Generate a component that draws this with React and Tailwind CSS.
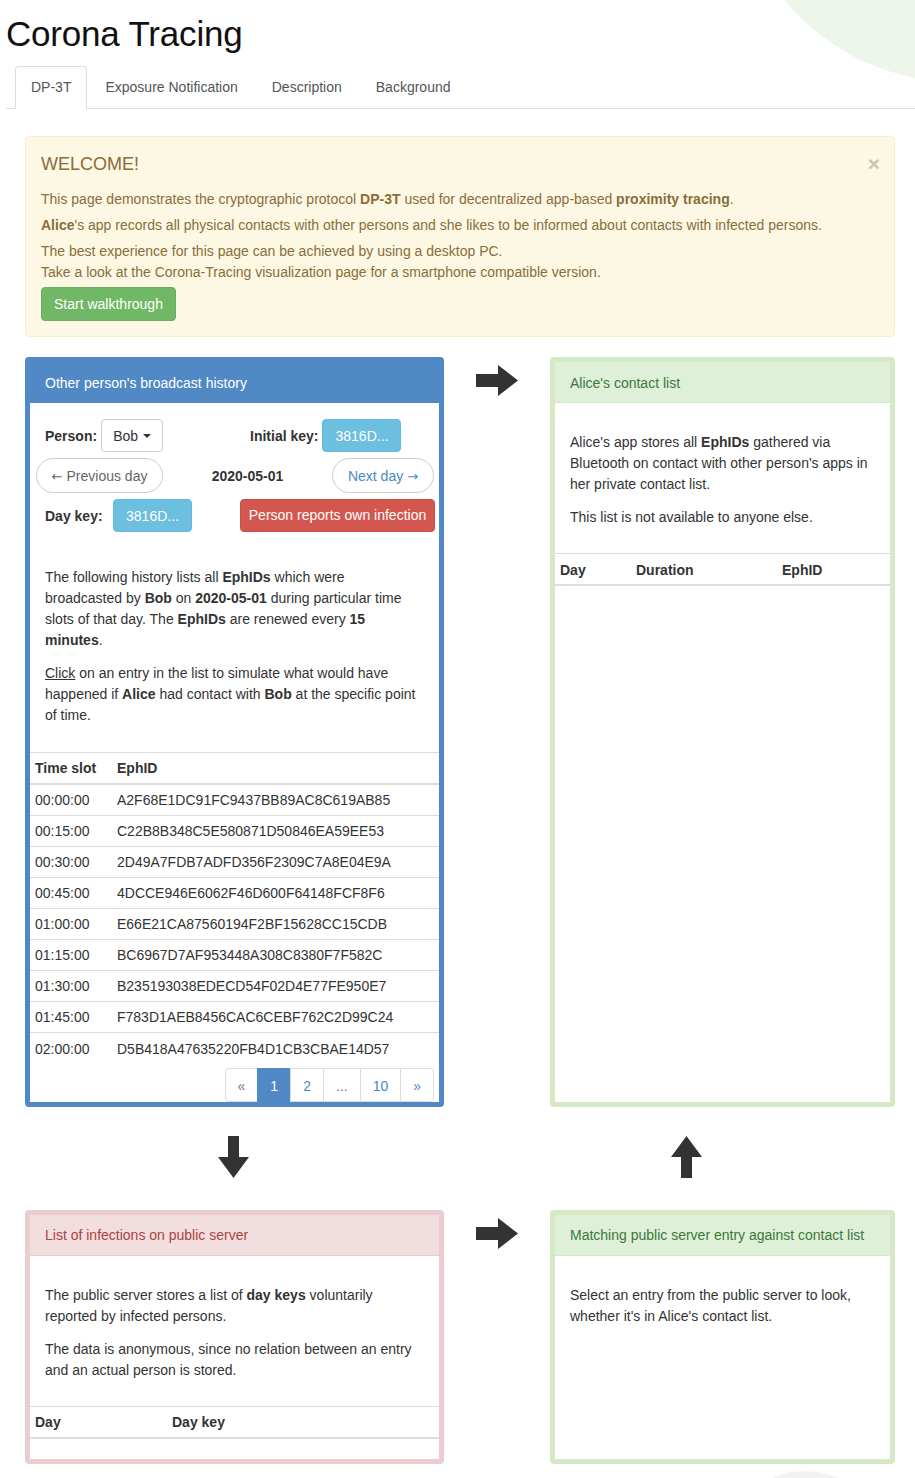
import React from 'react';

const slots = [
  ['00:00:00', 'A2F68E1DC91FC9437BB89AC8C619AB85'],
  ['00:15:00', 'C22B8B348C5E580871D50846EA59EE53'],
  ['00:30:00', '2D49A7FDB7ADFD356F2309C7A8E04E9A'],
  ['00:45:00', '4DCCE946E6062F46D600F64148FCF8F6'],
  ['01:00:00', 'E66E21CA87560194F2BF15628CC15CDB'],
  ['01:15:00', 'BC6967D7AF953448A308C8380F7F582C'],
  ['01:30:00', 'B235193038EDECD54F02D4E77FE950E7'],
  ['01:45:00', 'F783D1AEB8456CAC6CEBF762C2D99C24'],
  ['02:00:00', 'D5B418A47635220FB4D1CB3CBAE14D57'],
];

const ArrowRight = () => (
  <svg width="42" height="31" viewBox="0 0 42 31">
    <polygon points="0,9 22,9 22,0 42,15.5 22,31 22,22 0,22" fill="#333" />
  </svg>
);

const ArrowDown = () => (
  <svg width="31" height="42" viewBox="0 0 31 42">
    <polygon points="10,0 21,0 21,21 31,21 15.5,42 0,21 10,21" fill="#333" />
  </svg>
);

const ArrowUp = () => (
  <svg width="31" height="42" viewBox="0 0 31 42">
    <polygon points="15.5,0 31,21 21,21 21,42 10,42 10,21 0,21" fill="#333" />
  </svg>
);

const InfoBtn = ({ className = '' }) => (
  <div className={`flex h-[33px] w-[79px] items-center justify-center rounded-[4px] border border-[#5fbcdc] bg-[#6cbfdf] pt-[1px] text-white ${className}`}>
    3816D...
  </div>
);

export default function App() {
  return (
    <div className="relative min-h-[1478px] w-[915px] overflow-hidden bg-white font-['Liberation_Sans',Arial,sans-serif] text-[14px] leading-[21px] text-[#333]">
      {/* decorative background shapes */}
      <div className="absolute left-[735px] top-[-362px] h-[444px] w-[444px] rounded-full bg-[#eef6ec]" />
      <div className="absolute left-[725px] top-[1471px] h-[160px] w-[160px] rounded-full bg-[#f2f2f2]" />

      <h1 className="relative pl-[6px] pt-[14px] text-[35px] leading-[40px] tracking-[-0.2px] text-[#111]">Corona Tracing</h1>

      {/* tabs */}
      <div className="relative ml-[6px] mt-[12px] flex border-b border-[#ddd] pl-[9px]">
        <div className="-mb-px mr-[2px] rounded-t-[4px] border border-[#ddd] border-b-white bg-white px-[15px] py-[10px] leading-[20px] text-[#555]">DP-3T</div>
        {['Exposure Notification', 'Description', 'Background'].map((t) => (
          <div key={t} className="mr-[2px] rounded-t-[4px] border border-transparent px-[15px] py-[10px] leading-[20px] text-[#555]">{t}</div>
        ))}
      </div>

      {/* welcome alert */}
      <div className="relative ml-[25px] mt-[27px] w-[870px] rounded-[4px] border border-[#faebcc] bg-[#fcf8e3] p-[15px] text-[#8a6d3b]">
        <div className="flex items-center justify-between">
          <div className="text-[18px] leading-[24px]">WELCOME!</div>
          <div className="mr-[-1px] text-[21px] font-bold leading-[24px] text-[#c9c4b4]">×</div>
        </div>
        <p className="mt-[13px]">This page demonstrates the cryptographic protocol <b>DP-3T</b> used for decentralized app-based <b>proximity tracing</b>.</p>
        <p className="mt-[5px]"><b>Alice</b>'s app records all physical contacts with other persons and she likes to be informed about contacts with infected persons.</p>
        <p className="mt-[5px]">The best experience for this page can be achieved by using a desktop PC.<br />Take a look at the Corona-Tracing visualization page for a smartphone compatible version.</p>
        <div className="mt-[4px] inline-flex h-[34px] items-center rounded-[4px] border border-[#68ae5f] bg-[#70b766] px-[12px] pt-[1px] text-white">Start walkthrough</div>
      </div>

      {/* panels grid */}
      <div className="relative ml-[25px] mt-[20px] grid grid-cols-[419px_106px_345px]">
        {/* broadcast history */}
        <div className="flex flex-col rounded-[4px] border-[5px] border-[#5089c6] bg-white">
          <div className="flex h-[41px] items-center bg-[#5089c6] px-[15px] pt-[2px] text-white">Other person's broadcast history</div>
          <div className="flex flex-col">
            <div className="px-[15px] pt-[16px]">
              <div className="flex h-[33px] items-center">
                <div className="flex w-[205px] items-center">
                  <b className="pt-[2px]">Person:</b>
                  <div className="ml-[4px] flex h-[33px] w-[62px] items-center justify-center rounded-[4px] border border-[#ccc] bg-white pt-[1px]">
                    Bob
                    <span className="ml-[5px] inline-block h-0 w-0 border-x-[4px] border-t-[4px] border-x-transparent border-t-[#333]" />
                  </div>
                </div>
                <b className="pt-[2px]">Initial key:</b>
                <InfoBtn className="ml-[4px]" />
              </div>
              <div className="-ml-[9px] -mr-[10px] mt-[6px] flex h-[35px] items-center justify-between">
                <div className="flex h-[35px] w-[127px] items-center justify-center rounded-full border border-[#ccc] pt-[1px] text-[#666]">
                  <span className="mr-[4px] font-['DejaVu_Sans',sans-serif] text-[13px]">←</span>Previous day
                </div>
                <b className="pt-[2px]">2020-05-01</b>
                <div className="flex h-[35px] w-[102px] items-center justify-center rounded-full border border-[#ccc] pt-[1px] text-[#4a87c5]">
                  Next day<span className="ml-[4px] font-['DejaVu_Sans',sans-serif] text-[13px]">→</span>
                </div>
              </div>
              <div className="mt-[6px] flex h-[33px] items-center">
                <b className="w-[68px] pt-[1px]">Day key:</b>
                <InfoBtn />
                <div className="-mr-[11px] ml-auto flex h-[33px] w-[195px] items-center justify-center rounded-[4px] border border-[#c9514b] bg-[#d4574f] text-white">Person reports own infection</div>
              </div>
              <p className="mt-[35px]">
                The following history lists all <b>EphIDs</b> which were broadcasted by <b>Bob</b> on <b>2020-05-01</b> during particular time slots of that day. The <b>EphIDs</b> are renewed every <b>15 minutes</b>.
              </p>
              <p className="mt-[12px]">
                <span className="underline">Click</span> on an entry in the list to simulate what would have happened if <b>Alice</b> had contact with <b>Bob</b> at the specific point of time.
              </p>
            </div>
            <div className="mt-[26px]">
              <div className="flex h-[33px] items-center border-b-2 border-t border-b-[#ddd] border-t-[#ddd] pt-[1px] font-bold">
                <div className="w-[82px] pl-[5px]">Time slot</div>
                <div className="pl-[5px]">EphID</div>
              </div>
              {slots.map(([t, id]) => (
                <div key={t} className="flex h-[31px] items-center border-b border-[#ddd] pt-[1px] last:border-b-0">
                  <div className="w-[82px] pl-[5px]">{t}</div>
                  <div className="pl-[5px]">{id}</div>
                </div>
              ))}
            </div>
            <div className="mt-[4px] flex justify-end pr-[5px] leading-[20px]">
              <div className="rounded-l-[4px] border border-[#ddd] px-[12px] pb-[5px] pt-[7px] text-[#777]">«</div>
              <div className="-ml-px border border-[#5089c6] bg-[#5089c6] px-[12px] pb-[5px] pt-[7px] text-white">1</div>
              <div className="-ml-px border border-[#ddd] px-[12px] pb-[5px] pt-[7px] text-[#4a87c5]">2</div>
              <div className="-ml-px border border-[#ddd] px-[12px] pb-[5px] pt-[7px] text-[#777]">...</div>
              <div className="-ml-px border border-[#ddd] px-[12px] pb-[5px] pt-[7px] text-[#4a87c5]">10</div>
              <div className="-ml-px rounded-r-[4px] border border-[#ddd] px-[12px] pb-[5px] pt-[7px] text-[#4a87c5]">»</div>
            </div>
          </div>
        </div>

        <div className="flex justify-center pt-[8px]">
          <div><ArrowRight /></div>
        </div>

        {/* contact list */}
        <div className="flex flex-col rounded-[4px] border-[5px] border-[#d6e9c6] bg-white">
          <div className="flex h-[41px] items-center border-b border-[#d6e9c6] bg-[#dff0d8] px-[15px] pt-[2px] text-[#3c763d]">Alice's contact list</div>
          <div className="flex flex-1 flex-col">
            <div className="px-[15px] pt-[29px]">
              <p>Alice's app stores all <b>EphIDs</b> gathered via Bluetooth on contact with other person's apps in her private contact list.</p>
              <p className="mt-[12px]">This list is not available to anyone else.</p>
            </div>
            <div className="mt-[25px] flex h-[33px] items-center border-b-2 border-t border-b-[#ddd] border-t-[#ddd] pt-[2px] font-bold">
              <div className="w-[76px] pl-[5px]">Day</div>
              <div className="w-[146px] pl-[5px]">Duration</div>
              <div className="pl-[5px]">EphID</div>
            </div>
          </div>
        </div>

        {/* arrows between rows */}
        <div className="flex h-[103px] pl-[193px] pt-[29px]">
          <div><ArrowDown /></div>
        </div>
        <div />
        <div className="flex h-[103px] pl-[121px] pt-[29px]">
          <div><ArrowUp /></div>
        </div>

        {/* public server */}
        <div className="flex flex-col rounded-[4px] border-[5px] border-[#ebccd1] bg-white">
          <div className="flex h-[41px] items-center border-b border-[#ebccd1] bg-[#f2dede] px-[15px] pt-[1px] text-[#a94442]">List of infections on public server</div>
          <div className="flex flex-col">
            <div className="px-[15px] pt-[29px]">
              <p>The public server stores a list of <b>day keys</b> voluntarily reported by infected persons.</p>
              <p className="mt-[12px]">The data is anonymous, since no relation between an entry and an actual person is stored.</p>
            </div>
            <div className="mt-[25px] flex h-[33px] items-center border-b-2 border-t border-b-[#ddd] border-t-[#ddd] pt-[1px] font-bold">
              <div className="w-[137px] pl-[5px]">Day</div>
              <div className="pl-[5px]">Day key</div>
            </div>
            <div className="h-[20px]" />
          </div>
        </div>

        <div className="flex justify-center pt-[8px]">
          <div><ArrowRight /></div>
        </div>

        {/* matching */}
        <div className="flex flex-col rounded-[4px] border-[5px] border-[#d6e9c6] bg-white">
          <div className="flex h-[41px] items-center border-b border-[#d6e9c6] bg-[#dff0d8] px-[15px] pt-[1px] text-[#3c763d]">Matching public server entry against contact list</div>
          <div className="flex-1 px-[15px] pt-[29px]">
            <p>Select an entry from the public server to look, whether it's in Alice's contact list.</p>
          </div>
        </div>
      </div>
    </div>
  );
}
